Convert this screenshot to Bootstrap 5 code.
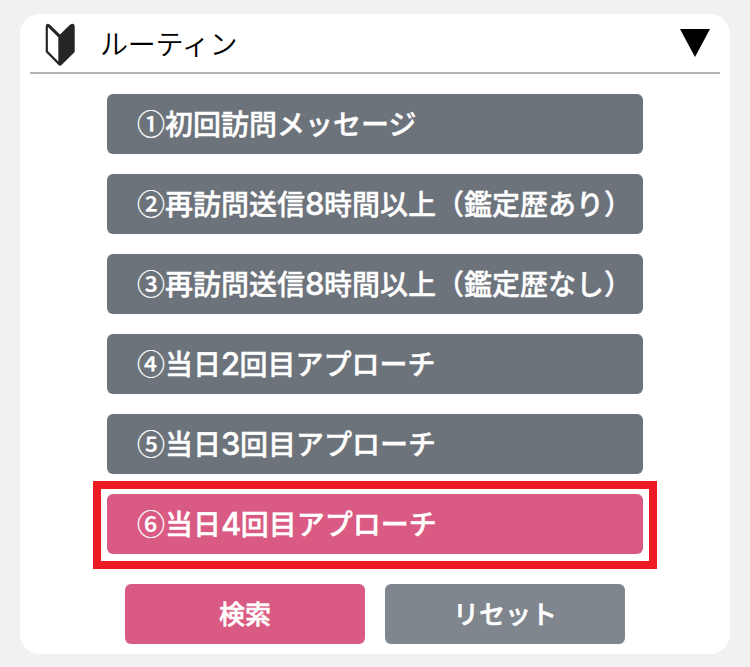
<!DOCTYPE html>
<html lang="ja">
<head>
<meta charset="utf-8">
<meta name="viewport" content="width=device-width, initial-scale=1">
<title>ルーティン</title>
<link href="https://cdn.jsdelivr.net/npm/bootstrap@5.3.0/dist/css/bootstrap.min.css" rel="stylesheet">
<style>
body { background: #f1f1f1; color: #000; font-family: "Noto Sans CJK JP", sans-serif; }
.panel { width: 710px; height: 640px; margin: 14px auto 0; border-radius: 20px; padding: 0 10px; }
.panel-head { height: 60px; border-bottom: 2px solid #b3b3b3; padding: 0 10px 0 15px; }
.mark-icon { margin-top: 3px; }
.panel-title { font-size: 28px; line-height: 60px; font-weight: 350; margin-left: 25px; letter-spacing: -.2px; }
.routines { width: 536px; margin: 20px auto 0; gap: 20px; }
.routine { --bs-btn-bg: #6c737b; --bs-btn-color: #fff; --bs-btn-border-width: 0; height: 60px; padding: 0 0 2px 30px; border-radius: 6px; font-size: 28px; line-height: 58px; font-weight: 500; -webkit-text-stroke: .4px #fff; }
.chosen { --bs-btn-bg: #d95a82; }
.chosen-frame { height: 88px; margin: -13px -14px -15px; padding: 5px 6px 7px; border: 8px solid #ed1c24; }
.digit { font-family: Inter, sans-serif; font-size: 31px; line-height: 1; letter-spacing: -.6px; }
.ring { -webkit-text-stroke-width: .2px; }
.actions { gap: 20px; margin-top: 30px; }
.action { --bs-btn-color: #fff; --bs-btn-border-width: 0; width: 240px; height: 60px; padding: 0 0 3px; border-radius: 6px; font-size: 26px; line-height: 57px; font-weight: 500; -webkit-text-stroke: .5px #fff; }
.search { --bs-btn-bg: #d95a82; }
.reset { --bs-btn-bg: #80868d; }
</style>
<script src="https://cdn.jsdelivr.net/npm/bootstrap@5.3.0/dist/js/bootstrap.bundle.min.js"></script>
</head>
<body>
<main class="panel bg-white">
  <header class="panel-head d-flex align-items-center">
    <svg class="mark-icon" width="30" height="44" viewBox="0 0 30 44" aria-hidden="true">
      <path d="M15 11.5 25 1.8Q29.5-1 29.7 3.5V29L16.5 42Q15 43.5 13.5 42L.7 29V3.5Q.9-1 5 1.8Z" fill="#252525"/>
      <path d="M2.9 4 13.3 14.2V38.6L2.9 28Z" fill="#fff"/>
    </svg>
    <h1 class="panel-title mb-0">ルーティン</h1>
    <svg class="ms-auto" width="30" height="28" viewBox="0 0 30 28" aria-hidden="true"><path d="M0 0H30L15 28Z"/></svg>
  </header>
  <div class="routines d-flex flex-column">
    <button type="button" class="btn routine text-start text-nowrap"><span class="ring">①</span>初回訪問メッセージ</button>
    <button type="button" class="btn routine text-start text-nowrap"><span class="ring">②</span>再訪問送信<span class="digit">8</span>時間以上（鑑定歴あり）</button>
    <button type="button" class="btn routine text-start text-nowrap"><span class="ring">③</span>再訪問送信<span class="digit">8</span>時間以上（鑑定歴なし）</button>
    <button type="button" class="btn routine text-start text-nowrap"><span class="ring">④</span>当日<span class="digit">2</span>回目アプローチ</button>
    <button type="button" class="btn routine text-start text-nowrap"><span class="ring">⑤</span>当日<span class="digit">3</span>回目アプローチ</button>
    <div class="chosen-frame d-flex flex-column">
      <button type="button" class="btn routine chosen text-start text-nowrap"><span class="ring">⑥</span>当日<span class="digit">4</span>回目アプローチ</button>
    </div>
  </div>
  <div class="actions d-flex justify-content-center">
    <button type="button" class="btn action search">検索</button>
    <button type="button" class="btn action reset">リセット</button>
  </div>
</main>
</body>
</html>
